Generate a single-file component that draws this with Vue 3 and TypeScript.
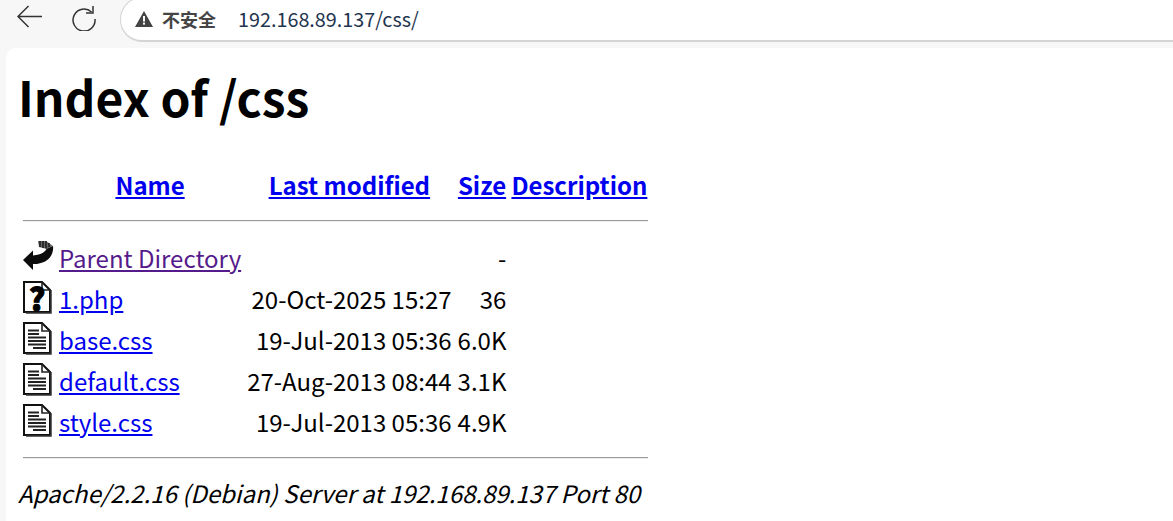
<template>
  <div class="browser">
    <header class="toolbar">
      <button class="nav-btn" aria-label="Back">
        <svg width="26" height="24" viewBox="0 0 26 24" fill="none" stroke="#333" stroke-width="1.5">
          <path d="M1 11.5H25M11.5 1L1 11.5L11.5 22" />
        </svg>
      </button>
      <button class="nav-btn reload" aria-label="Reload">
        <svg width="26" height="26" viewBox="0 0 26 26" fill="none" stroke="#333" stroke-width="1.5">
          <path d="M20.5 7A11 11 0 1 0 24 14" />
          <path d="M22 1V8H15" />
        </svg>
      </button>
      <div class="omnibox">
        <svg class="warn" width="18" height="16" viewBox="0 0 18 16">
          <path d="M9 0L18 16H0Z" fill="#444" />
          <rect x="8" y="5" width="2" height="5.5" fill="#fff" />
          <rect x="8" y="11.6" width="2" height="2" fill="#fff" />
        </svg>
        <span class="warn-text">不安全</span>
        <span class="url">192.168.89.137/css/</span>
      </div>
    </header>

    <main class="page">
      <h1>Index of /css</h1>
      <table>
        <thead>
          <tr class="head-row">
            <th class="icon-col"></th>
            <th class="name-col"><a href="#">Name</a></th>
            <th class="date-col"><a href="#">Last modified</a></th>
            <th class="size-col"><a href="#">Size</a></th>
            <th class="desc-col"><a href="#">Description</a></th>
          </tr>
          <tr>
            <th colspan="5" class="rule-cell"><hr /></th>
          </tr>
        </thead>
        <tbody>
          <tr v-for="row in rows" :key="row.name">
            <td class="icon-col">
              <div class="icon-wrap">
                <svg v-if="row.kind === 'back'" class="file-icon" width="32" height="34" viewBox="0 3 32 34">
                  <path d="M1 22L11 12.5V17.5C17 17 23 15 25 10L31 8C32 16 27 23 19 25C16 26 14 26 11 26V32Z" fill="#0c0c0c" />
                  <path d="M16 3L24 3L31 8L25 11L17 9Z" fill="#666" />
                  <path d="M18 3V9M21 3V10M24 3V10.5M27 5V9" stroke="#111" stroke-width="1.3" />
                </svg>
                <svg v-else class="file-icon" width="30" height="34" viewBox="0 2 30 34">
                  <path d="M2 2H20L28 10V32H2Z" fill="#fff" stroke="#111" stroke-width="2" />
                  <path d="M20 2V10H28" fill="none" stroke="#222" stroke-width="1.6" />
                  <path d="M29 10V33H4" fill="none" stroke="#333" stroke-width="1.5" />
                  <path v-if="row.kind === 'text'" d="M6 9.5H17M6 13H17M6 16.5H24M6 20H24M6 23.5H24M11 27H24" stroke="#222" stroke-width="2" />
                </svg>
                <span v-if="row.kind === 'unknown'" class="qmark">?</span>
              </div>
            </td>
            <td class="name-col">
              <a href="#" :class="{ visited: row.kind === 'back' }">{{ row.name }}</a>
            </td>
            <td class="date-col align-right">{{ row.date }}</td>
            <td class="size-col align-right">{{ row.size }}</td>
            <td class="desc-col"></td>
          </tr>
          <tr>
            <th colspan="5" class="rule-cell bottom"><hr /></th>
          </tr>
        </tbody>
      </table>
      <address>Apache/2.2.16 (Debian) Server at 192.168.89.137 Port 80</address>
    </main>
  </div>
</template>

<script setup lang="ts">
interface Row {
  name: string
  date: string
  size: string
  kind: 'back' | 'unknown' | 'text'
}

const rows: Row[] = [
  { name: 'Parent Directory', date: '', size: '-', kind: 'back' },
  { name: '1.php', date: '20-Oct-2025 15:27', size: '36', kind: 'unknown' },
  { name: 'base.css', date: '19-Jul-2013 05:36', size: '6.0K', kind: 'text' },
  { name: 'default.css', date: '27-Aug-2013 08:44', size: '3.1K', kind: 'text' },
  { name: 'style.css', date: '19-Jul-2013 05:36', size: '4.9K', kind: 'text' }
]
</script>

<style>
html,
body {
  margin: 0;
  height: 100%;
  overflow: hidden;
  background: #f7f7f7;
}
</style>

<style scoped>
.browser {
  height: 521px;
  display: flex;
  flex-direction: column;
  font-family: "Noto Sans CJK SC", "Noto Sans", sans-serif;
  color: #000;
}

.toolbar {
  height: 48px;
  flex: none;
  display: flex;
  align-items: flex-start;
  background: #f7f7f7;
  overflow: hidden;
}

.nav-btn {
  border: 0;
  padding: 0;
  background: none;
  margin: 5px 0 0 17px;
  display: flex;
}

.nav-btn.reload {
  margin: 5px 0 0 28px;
}

.omnibox {
  flex: 1;
  height: 45px;
  margin: -3px 0 0 23px;
  box-sizing: border-box;
  background: #fff;
  border: 1px solid #d4d4d4;
  border-width: 1px 0 2px 1px;
  border-radius: 22px 0 0 22px;
  display: flex;
  align-items: center;
  padding: 0 0 1px 14px;
}

.warn {
  flex: none;
}

.warn-text {
  margin-left: 9px;
  font-size: 18px;
  font-weight: 700;
  color: #444;
}

.url {
  margin-left: 22px;
  font-size: 19.8px;
  color: #1f3550;
}

.page {
  flex: 1;
  margin-left: 6px;
  padding: 0 12px;
  background: #fff;
  border-radius: 10px 0 0 0;
  overflow: hidden;
}

h1 {
  margin: 15px 0 0;
  font-size: 48px;
  line-height: 67px;
  font-weight: 700;
}

table {
  margin-top: 39px;
  margin-left: 3px;
  border-spacing: 0;
  border-collapse: separate;
  font-size: 24px;
  line-height: 32px;
}

th {
  padding: 0 3px;
  font-weight: 700;
}

.head-row th {
  height: 32px;
}

.head-row .desc-col {
  padding: 0 1px 0 2px;
}

td {
  padding: 0 3px;
  height: 41px;
  white-space: nowrap;
}

.icon-col {
  width: 30px;
  padding-left: 2px;
}

.icon-wrap {
  position: relative;
  height: 34px;
}

.file-icon {
  display: block;
  margin: 0 -10px 0 -1px;
  overflow: visible;
  filter: blur(0.4px);
}

.qmark {
  position: absolute;
  left: -1px;
  top: -2px;
  width: 30px;
  text-align: center;
  font-size: 31px;
  line-height: 36px;
  font-weight: 900;
  -webkit-text-stroke: 1px #000;
}

.name-col {
  text-align: left;
}

th.name-col {
  text-align: center;
}

.align-right {
  text-align: right;
}

.rule-cell {
  padding: 4px 0 0 2px;
  height: 32px;
}

.rule-cell.bottom {
  height: 24px;
}

hr {
  margin: 0;
  border: 0;
  border-top: 1px solid #9a9a9a;
  border-bottom: 1px solid #eee;
}

a {
  color: #0000ee;
}

a.visited {
  color: #551a8b;
}

address {
  margin-top: 6px;
  font-size: 24px;
  line-height: 34px;
  font-style: italic;
}
</style>
